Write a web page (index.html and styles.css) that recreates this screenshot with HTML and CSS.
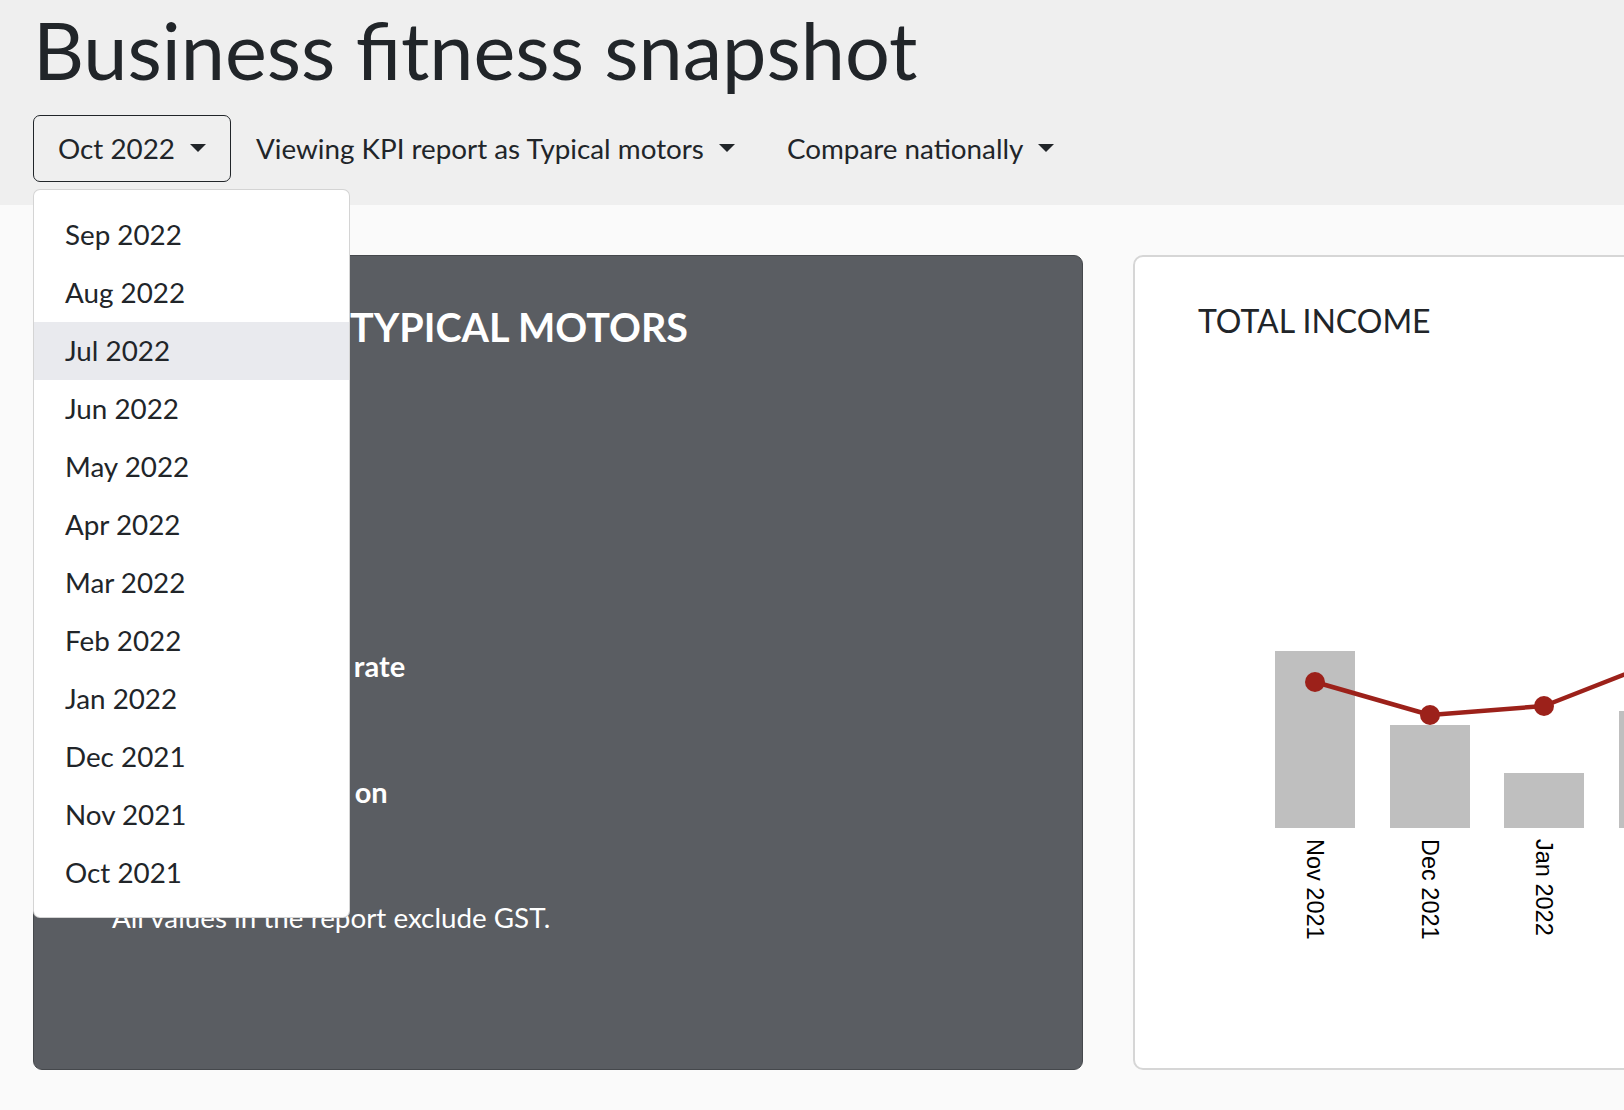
FILE: index.html
```html
<!DOCTYPE html>
<html lang="en">
<head>
<meta charset="utf-8">
<title>Business fitness snapshot</title>
<link rel="stylesheet" href="styles.css">
</head>
<body>
<header class="top">
  <h1 class="page-title">Business fitness snapshot</h1>
  <div class="controls">
    <div class="dropdown">
      <button class="btn btn-outline" type="button">Oct 2022<span class="caret"></span></button>
      <ul class="dropdown-menu">
        <li class="dropdown-item">Sep 2022</li>
        <li class="dropdown-item">Aug 2022</li>
        <li class="dropdown-item is-hover">Jul 2022</li>
        <li class="dropdown-item">Jun 2022</li>
        <li class="dropdown-item">May 2022</li>
        <li class="dropdown-item">Apr 2022</li>
        <li class="dropdown-item">Mar 2022</li>
        <li class="dropdown-item">Feb 2022</li>
        <li class="dropdown-item">Jan 2022</li>
        <li class="dropdown-item">Dec 2021</li>
        <li class="dropdown-item">Nov 2021</li>
        <li class="dropdown-item">Oct 2021</li>
      </ul>
    </div>
    <button class="btn btn-plain btn-view" type="button">Viewing KPI report as Typical motors<span class="caret"></span></button>
    <button class="btn btn-plain btn-compare" type="button">Compare nationally<span class="caret"></span></button>
  </div>
</header>

<main class="cards">
  <section class="card card-dark">
    <h2 class="dark-title"><span class="dark-lead">Report for</span> Typical motors</h2>
    <ul class="kpi-list">
      <li class="kpi"><span class="kpi-name">Total income</span><span class="kpi-value">$1.2m</span></li>
      <li class="kpi"><span class="kpi-name">Gross profit</span><span class="kpi-value">38%</span></li>
      <li class="kpi"><span class="kpi-name">Average inventory rate</span><span class="kpi-value">4.1</span></li>
      <li class="kpi"><span class="kpi-name kpi-name-wide">Net margin return on</span><span class="kpi-value">sales</span></li>
    </ul>
    <p class="dark-note">All values in the report exclude GST.</p>
  </section>

  <section class="card card-chart">
    <h3 class="chart-title">TOTAL INCOME</h3>
    <svg class="chart" width="520" height="360" viewBox="0 0 520 360" xmlns="http://www.w3.org/2000/svg">
      <g fill="#bfbfbf">
        <rect x="77" y="51" width="80" height="177"/>
        <rect x="192" y="125" width="80" height="103"/>
        <rect x="306" y="173" width="80" height="55"/>
        <rect x="421" y="111" width="80" height="117"/>
      </g>
      <polyline points="117,82 232,115 346,106 461,61" fill="none" stroke="#9c211a" stroke-width="4.5" stroke-linejoin="round"/>
      <g fill="#9c211a">
        <circle cx="117" cy="82" r="10"/>
        <circle cx="232" cy="115" r="10"/>
        <circle cx="346" cy="106" r="10"/>
        <circle cx="461" cy="61" r="10"/>
      </g>
      <g class="axis-label">
        <text transform="translate(108.6,239) rotate(90)">Nov 2021</text>
        <text transform="translate(223.6,239) rotate(90)">Dec 2021</text>
        <text transform="translate(337.6,239) rotate(90)">Jan 2022</text>
        <text transform="translate(452.6,239) rotate(90)">Feb 2022</text>
      </g>
    </svg>
  </section>
</main>
</body>
</html>
```

FILE: styles.css
```css
* { box-sizing: border-box; }

html, body {
  margin: 0;
  padding: 0;
}

body {
  width: 1624px;
  height: 1110px;
  overflow: hidden;
  background: #fafafa;
  color: #212529;
  font-family: Lato, "Noto Sans", sans-serif;
  font-size: 27.8px;
  line-height: 43.5px;
}

.top {
  background: #efefef;
  padding: 2px 0 23px 33px;
}

.page-title {
  margin: 0 0 18px 0;
  font-size: 79.2px;
  font-weight: 400;
  line-height: 1.2;
  color: #212529;
}

.controls {
  display: flex;
  align-items: center;
}

.dropdown {
  position: relative;
}

.btn {
  font-family: inherit;
  font-size: 27.8px;
  line-height: 43.5px;
  color: #212529;
  background: transparent;
  border: 1px solid transparent;
  border-radius: 7px;
  padding: 10.9px 24px;
  cursor: pointer;
  display: inline-flex;
  align-items: baseline;
}

.btn-outline {
  border-color: #212529;
}

.btn-plain {
  padding-left: 21px;
  padding-right: 21px;
}

.btn-view { margin-left: 3px; }
.btn-compare { margin-left: 8px; }

.caret {
  display: inline-block;
  width: 0;
  height: 0;
  margin-left: 15px;
  border-top: 8px solid #212529;
  border-left: 8px solid transparent;
  border-right: 8px solid transparent;
  position: relative;
  top: -7px;
}

.dropdown-menu {
  position: absolute;
  top: calc(100% + 7px);
  left: 0;
  z-index: 10;
  width: 317px;
  margin: 0;
  padding: 15.5px 0;
  list-style: none;
  background: #fff;
  border: 1px solid rgba(0, 0, 0, 0.17);
  border-radius: 7px;
}

.dropdown-item {
  padding: 7.25px 31px;
  white-space: nowrap;
  color: #212529;
}

.dropdown-item.is-hover {
  background: #e9eaee;
}

.cards {
  display: flex;
  gap: 50px;
  padding: 50px 0 0 33px;
}

.card {
  flex: 0 0 1050px;
  height: 815px;
  border-radius: 9px;
}

.card-dark {
  background: #5a5d62;
  border: 1px solid #45484c;
  color: #fff;
  padding: 46px 40px 0 78px;
}

.dark-title {
  margin: 0 0 40px 0;
  font-size: 39.5px;
  font-weight: 700;
  line-height: 50px;
  text-transform: uppercase;
}

.dark-lead {
  letter-spacing: -1.1px;
}

.kpi-list {
  list-style: none;
  margin: 0;
  padding: 0;
}

.kpi {
  display: flex;
  flex-direction: column;
  margin-bottom: 39px;
}

.kpi-name {
  font-size: 29px;
  font-weight: 700;
}

.kpi-name-wide {
  word-spacing: 1.6px;
}

.kpi-value {
  font-weight: 400;
}

.dark-note {
  margin: 0;
}

.card-chart {
  background: #fff;
  border: 2px solid #d6d6d6;
  border-radius: 10px;
  padding: 45px 0 0 63px;
}

.chart-title {
  margin: 0;
  font-size: 32px;
  font-weight: 400;
  line-height: 1.2;
  color: #212529;
}

.chart {
  display: block;
  margin-top: 259px;
}

.axis-label text {
  font-family: "Liberation Sans", Arial, sans-serif;
  font-size: 23.5px;
  fill: #000;
}
```
